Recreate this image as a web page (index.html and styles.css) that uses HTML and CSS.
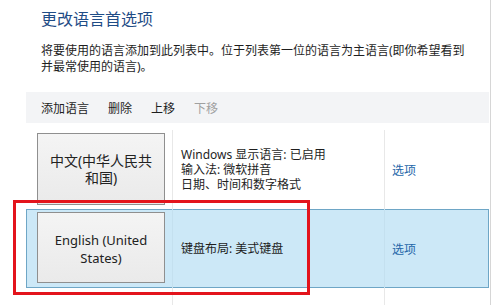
FILE: index.html
```html
<!DOCTYPE html>
<html lang="zh-CN">
<head>
<meta charset="utf-8">
<title>更改语言首选项</title>
<link rel="stylesheet" href="styles.css">
</head>
<body>
<div class="page">
  <h1 class="title">更改语言首选项</h1>
  <p class="desc">将要使用的语言添加到此列表中。位于列表第一位的语言为主语言(即你希望看到并最常使用的语言)。</p>
  <div class="toolbar">
    <span class="tool">添加语言</span>
    <span class="tool">删除</span>
    <span class="tool">上移</span>
    <span class="tool disabled">下移</span>
  </div>
  <div class="list">
    <div class="row">
      <div class="cell-lang"><div class="langbtn">中文(中华人民共和国)</div></div>
      <div class="cell-info"><div class="info-lines">Windows 显示语言: 已启用<br>输入法: 微软拼音<br>日期、时间和数字格式</div></div>
      <div class="cell-opt"><span class="link">选项</span></div>
    </div>
    <div class="row selected">
      <div class="cell-lang"><div class="langbtn latin">English (United States)</div></div>
      <div class="cell-info"><div class="info-lines">键盘布局: 美式键盘</div></div>
      <div class="cell-opt"><span class="link">选项</span></div>
    </div>
    <div class="row empty">
      <div class="cell-lang"></div>
      <div class="cell-info"></div>
      <div class="cell-opt"></div>
    </div>
  </div>
  <div class="highlight"></div>
</div>
</body>
</html>
```
FILE: styles.css
```css
html, body {
  margin: 0;
  padding: 0;
  background: #ffffff;
}
body {
  font-family: "Noto Sans", "Noto Sans CJK SC", sans-serif;
  color: #1e1e1e;
  overflow: hidden;
}
.page {
  position: relative;
  width: 490px;
  height: 305px;
  border-right: 1px solid #d6d6d6;
  display: flex;
  flex-direction: column;
  overflow: hidden;
}
.title {
  margin: 8px 0 0 41px;
  font-family: "Noto Sans CJK SC", sans-serif;
  font-weight: normal;
  font-size: 16px;
  line-height: 20px;
  color: #1f4c86;
}
.desc {
  margin: 15px 0 0 41px;
  width: 430px;
  font-family: "Noto Sans", "Noto Sans CJK SC", sans-serif;
  font-size: 12px;
  line-height: 16px;
  color: #1e1e1e;
}
.toolbar {
  margin: 17px 1px 0 26px;
  height: 31px;
  background: #f3f4f6;
  display: flex;
  align-items: center;
  padding-left: 15px;
  gap: 19px;
  font-family: "Noto Sans CJK SC", sans-serif;
  font-size: 12px;
  line-height: 31px;
}
.tool { color: #1e1e1e; }
.tool.disabled { color: #a0a0a0; }
.list {
  margin: 7px 1px 0 26px;
  display: flex;
  flex-direction: column;
  flex: 1;
}
.row {
  display: flex;
  height: 79px;
  box-sizing: border-box;
  flex: none;
}
.row.selected {
  background: #cce8f7;
  box-shadow: inset 0 0 0 1px #6ea6c6;
}
.row.empty {
  flex: 1;
}
.cell-lang {
  width: 146px;
  flex: none;
  box-sizing: border-box;
  padding: 3px 0 0 11px;
}
.langbtn {
  width: 128px;
  height: 72px;
  box-sizing: border-box;
  border: 1px solid #8f8f8f;
  background: linear-gradient(#f4f4f4, #eaeaea);
  display: flex;
  align-items: center;
  justify-content: center;
  text-align: center;
  padding: 0 10px;
  font-family: "Noto Sans", "Noto Sans CJK SC", sans-serif;
  font-size: 14px;
  line-height: 17.5px;
  color: #222222;
}
.langbtn.latin {
  font-size: 13px;
  line-height: 18px;
  padding-top: 2px;
}
.row.selected .langbtn {
  height: 71px;
}
.cell-info {
  width: 212px;
  flex: none;
  box-sizing: border-box;
  border-left: 1px solid #e8e8e8;
  padding-left: 8px;
  display: flex;
  align-items: center;
  font-family: "Noto Sans", "Noto Sans CJK SC", sans-serif;
  font-size: 12px;
  color: #1e1e1e;
}
.info-lines {
  line-height: 15px;
}
.cell-opt {
  flex: 1;
  box-sizing: border-box;
  border-left: 1px solid #e8e8e8;
  padding-left: 7px;
  display: flex;
  align-items: center;
  font-family: "Noto Sans CJK SC", sans-serif;
  font-size: 12px;
}
.row.selected .cell-info,
.row.selected .cell-opt {
  border-left-color: #c4e0ef;
}
.link { color: #2466a8; }
.highlight {
  position: absolute;
  left: 13px;
  top: 200px;
  width: 297px;
  height: 95px;
  box-sizing: border-box;
  border: 3px solid #e3141c;
  pointer-events: none;
}
```
